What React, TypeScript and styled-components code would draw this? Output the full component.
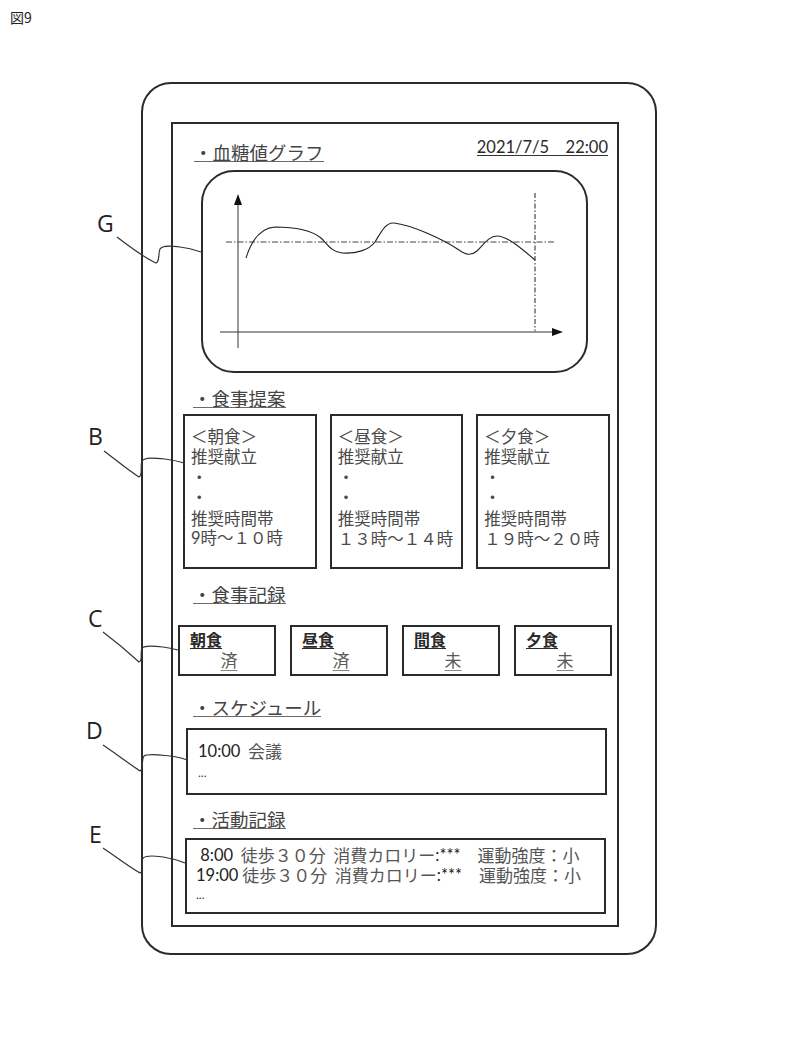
import React from 'react'
import styled, { createGlobalStyle } from 'styled-components'

const GlobalStyle = createGlobalStyle`
  html, body {
    margin: 0;
    padding: 0;
    background: #ffffff;
  }
  body {
    font-family: Lato, 'Noto Sans CJK JP', sans-serif;
    color: #3c3c3c;
  }
`

const Page = styled.div`
  position: relative;
  width: 811px;
  height: 1048px;
  overflow: hidden;
  background: #fff;
`

const Caption = styled.div`
  padding: 9px 0 0 10px;
  height: 20px;
  font-size: 14px;
  line-height: 16px;
  color: #222;
  font-family: 'Noto Sans CJK JP', sans-serif;
`

const Device = styled.div`
  box-sizing: border-box;
  width: 516px;
  height: 873px;
  margin: 53px 0 0 141px;
  padding: 38px 36px 26px 28px;
  border: 2px solid #2b2b2b;
  border-radius: 30px;
`

const Screen = styled.div`
  box-sizing: border-box;
  width: 448px;
  height: 805px;
  border: 2px solid #2b2b2b;
  display: flex;
  flex-direction: column;
`

const HeaderRow = styled.div`
  display: flex;
  justify-content: space-between;
  align-items: flex-start;
  padding: 15px 9px 0 21px;
`

const SectionTitle = styled.div<{ $top: number; $left?: number }>`
  align-self: flex-start;
  margin: ${(p) => p.$top}px 0 0 ${(p) => p.$left ?? 20}px;
  font-family: 'Noto Sans CJK JP', sans-serif;
  font-size: 18.5px;
  line-height: 18px;
  color: #444;
  border-bottom: 1.5px solid #6a6a6a;
  white-space: nowrap;
`

const DateText = styled.div`
  font-family: Lato, 'Noto Sans CJK JP', sans-serif;
  font-size: 16.5px;
  line-height: 16px;
  color: #2a2a2a;
  border-bottom: 1.5px solid #333;
  white-space: pre;
`

const GraphBox = styled.div`
  box-sizing: border-box;
  height: 203px;
  margin: 8px 29px 0 28px;
  border: 2px solid #2b2b2b;
  border-radius: 33px;
  display: flex;
`

const GraphSvg = styled.svg`
  display: block;
  flex: 1;
`

const CardRow = styled.div<{ $cols: number; $gap: number; $top: number; $left: number; $right: number }>`
  display: grid;
  grid-template-columns: repeat(${(p) => p.$cols}, 1fr);
  column-gap: ${(p) => p.$gap}px;
  margin: ${(p) => p.$top}px ${(p) => p.$right}px 0 ${(p) => p.$left}px;
`

const SuggestCard = styled.div`
  box-sizing: border-box;
  height: 155px;
  border: 2px solid #2b2b2b;
  padding: 10px 4px 0 6px;
  font-family: 'Noto Sans CJK JP', sans-serif;
  font-size: 16.5px;
  line-height: 20.4px;
  color: #4a4a4a;
  white-space: pre;
`

const CardLine = styled.div<{ $latin?: boolean }>`
  height: 20.4px;
  font-family: ${(p) => (p.$latin ? "Lato, 'Noto Sans CJK JP', sans-serif" : "'Noto Sans CJK JP', sans-serif")};
`

const RecordBox = styled.div`
  box-sizing: border-box;
  height: 51px;
  border: 2px solid #2b2b2b;
  padding: 2px 8px 0 10px;
  font-family: 'Noto Sans CJK JP', sans-serif;
  display: flex;
  flex-direction: column;
`

const RecordLabel = styled.span`
  align-self: flex-start;
  font-size: 16px;
  line-height: 20px;
  font-weight: 700;
  color: #2a2a2a;
  text-decoration: underline;
  text-underline-offset: 2px;
`

const RecordValue = styled.span`
  align-self: center;
  margin-left: 2px;
  font-size: 17px;
  line-height: 21px;
  color: #5a5a5a;
  text-decoration: underline;
  text-decoration-color: #888;
  text-underline-offset: 3px;
`

const ListBox = styled.div<{ $top: number; $left: number; $right: number; $height: number; $padTop: number; $padLeft: number }>`
  box-sizing: border-box;
  height: ${(p) => p.$height}px;
  margin: ${(p) => p.$top}px ${(p) => p.$right}px 0 ${(p) => p.$left}px;
  padding: ${(p) => p.$padTop}px 6px 0 ${(p) => p.$padLeft}px;
  border: 2px solid #2b2b2b;
  color: #444;
`

const ListLine = styled.div<{ $lh: number }>`
  display: flex;
  align-items: center;
  height: ${(p) => p.$lh}px;
  font-size: 17px;
  line-height: ${(p) => p.$lh}px;
  white-space: pre;
`

const Time = styled.span`
  font-family: Lato, sans-serif;
  font-size: 16.5px;
  color: #222;
`

const Jp = styled.span`
  font-family: 'Noto Sans CJK JP', sans-serif;
  color: #555;
`

const Dots = styled.span`
  font-family: Lato, sans-serif;
  font-size: 12px;
  color: #333;
`

const Overlay = styled.svg`
  position: absolute;
  left: 0;
  top: 0;
  pointer-events: none;
`

const RefLabel = styled.span<{ $x: number; $y: number }>`
  position: absolute;
  left: ${(p) => p.$x}px;
  top: ${(p) => p.$y}px;
  font-family: 'Open Sans', 'Liberation Sans', sans-serif;
  font-size: 23px;
  line-height: 24px;
  color: #222;
`

const suggestions = [
  { meal: '＜朝食＞', time: '9時～１０時', latin: true },
  { meal: '＜昼食＞', time: '１３時～１４時', latin: false },
  { meal: '＜夕食＞', time: '１９時～２０時', latin: false },
]

const records = [
  { label: '朝食', value: '済' },
  { label: '昼食', value: '済' },
  { label: '間食', value: '未' },
  { label: '夕食', value: '未' },
]

const activities = [
  { time: ' 8:00', gap: '  ' },
  { time: '19:00', gap: ' ' },
]

const leaders = [
  'M117,237 C130,247 145,258 156,263 C160,262 158,253 160,249 C163,245 172,246 180,247 C188,248 195,250 201,252',
  'M104,451 C116,460 128,470 139,477 C143,476 140,466 142,461 C145,457 155,458 165,459 C172,460 178,461 184,463',
  'M103,632 C115,641 127,651 139,662 C143,661 140,652 142,648 C145,645 155,646 163,647 C170,648 174,649 178,650',
  'M103,745 C115,753 128,763 140,771 C144,770 141,760 144,756 C148,753 160,755 170,756 C177,757 182,758 187,760',
  'M103,848 C115,856 128,866 140,873 C144,872 141,862 143,858 C147,855 158,856 168,858 C175,859 180,861 185,863',
]

const Graph = () => (
  <GraphSvg viewBox="2 2 383 199" preserveAspectRatio="none">
    <line x1="37" y1="34" x2="37" y2="178" stroke="#333" strokeWidth="1" />
    <polygon points="37,24 33,35 41,35" fill="#111" />
    <line x1="19" y1="162" x2="352" y2="162" stroke="#333" strokeWidth="1" />
    <polygon points="362,162 351,158 351,166" fill="#111" />
    <line x1="25" y1="72" x2="355" y2="72" stroke="#444" strokeWidth="1" strokeDasharray="6 2 1.5 2" />
    <line x1="334" y1="23" x2="334" y2="161" stroke="#222" strokeWidth="1" strokeDasharray="5 2 1.5 2" />
    <path
      d="M45,88 C50,72 58,58 74,57 C92,57 110,60 120,68 C127,75 131,82 141,83 C155,84 168,80 174,72 C180,62 185,52 193,53 C210,55 240,68 258,80 C265,85 270,86 276,81 C283,74 288,66 296,66 C306,66 320,78 334,90"
      fill="none"
      stroke="#222"
      strokeWidth="1.1"
    />
  </GraphSvg>
)

export default function App() {
  return (
    <Page>
      <GlobalStyle />
      <Caption>図9</Caption>
      <Device>
        <Screen>
          <HeaderRow>
            <SectionTitle $top={4} $left={0}>・血糖値グラフ</SectionTitle>
            <DateText>2021/7/5　22:00</DateText>
          </HeaderRow>
          <GraphBox>
            <Graph />
          </GraphBox>

          <SectionTitle $top={16}>・食事提案</SectionTitle>
          <CardRow $cols={3} $gap={13} $top={6} $left={10} $right={7}>
            {suggestions.map((s) => (
              <SuggestCard key={s.meal}>
                <CardLine>{s.meal}</CardLine>
                <CardLine>推奨献立</CardLine>
                <CardLine>・</CardLine>
                <CardLine>・</CardLine>
                <CardLine>推奨時間帯</CardLine>
                <CardLine $latin={s.latin}>{s.time}</CardLine>
              </SuggestCard>
            ))}
          </CardRow>

          <SectionTitle $top={16}>・食事記録</SectionTitle>
          <CardRow $cols={4} $gap={14} $top={21} $left={5} $right={5}>
            {records.map((r) => (
              <RecordBox key={r.label}>
                <RecordLabel>{r.label}</RecordLabel>
                <RecordValue>{r.value}</RecordValue>
              </RecordBox>
            ))}
          </CardRow>

          <SectionTitle $top={22}>・スケジュール</SectionTitle>
          <ListBox $top={11} $left={13} $right={10} $height={67} $padTop={10} $padLeft={10}>
            <ListLine $lh={22}>
              <Time>10:00</Time>
              <Jp>{'  会議'}</Jp>
            </ListLine>
            <ListLine $lh={22}>
              <Dots>...</Dots>
            </ListLine>
          </ListBox>

          <SectionTitle $top={15}>・活動記録</SectionTitle>
          <ListBox $top={9} $left={12} $right={11} $height={76} $padTop={5} $padLeft={9}>
            {activities.map((a) => (
              <ListLine key={a.time} $lh={20}>
                <Time>{a.time}</Time>
                <Jp>{a.gap}徒歩３０分  消費カロリー</Jp>
                <Time>:***</Time>
                <Jp>{'　運動強度：小'}</Jp>
              </ListLine>
            ))}
            <ListLine $lh={20}>
              <Dots>...</Dots>
            </ListLine>
          </ListBox>
        </Screen>
      </Device>

      <Overlay width="811" height="1048" viewBox="0 0 811 1048">
        {leaders.map((d, i) => (
          <path key={i} d={d} fill="none" stroke="#333" strokeWidth="1.2" />
        ))}
      </Overlay>
      <RefLabel $x={97} $y={211}>G</RefLabel>
      <RefLabel $x={88} $y={424}>B</RefLabel>
      <RefLabel $x={88} $y={606}>C</RefLabel>
      <RefLabel $x={86} $y={718}>D</RefLabel>
      <RefLabel $x={89} $y={822}>E</RefLabel>
    </Page>
  )
}
